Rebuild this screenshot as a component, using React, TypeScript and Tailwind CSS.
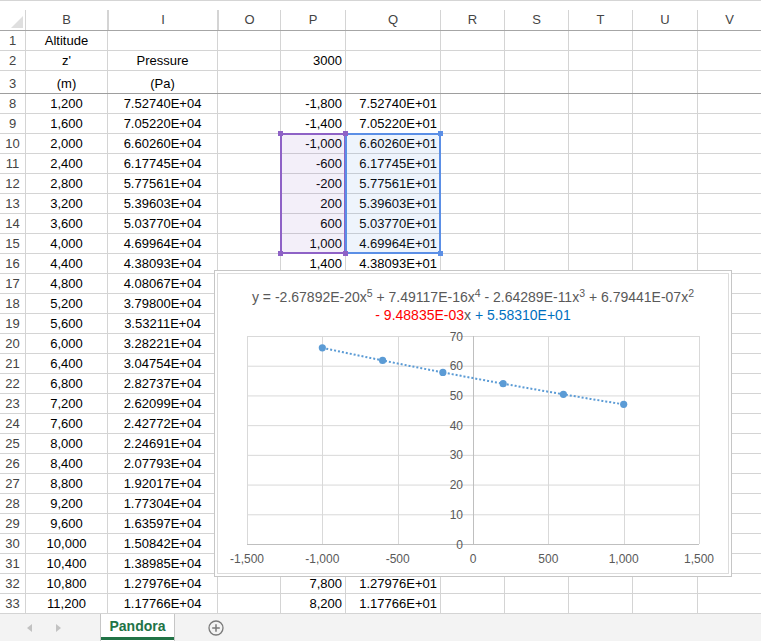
import React from "react";

const mantissas = [
  "7.52740", "7.05220", "6.60260", "6.17745", "5.77561", "5.39603", "5.03770",
  "4.69964", "4.38093", "4.08067", "3.79800", "3.53211", "3.28221", "3.04754",
  "2.82737", "2.62099", "2.42772", "2.24691", "2.07793", "1.92017", "1.77304",
  "1.63597", "1.50842", "1.38985", "1.27976", "1.17766",
];

const fmt = (n: number) => n.toLocaleString("en-US");

// trendline coefficients, highest power first
const coef = [-2.67892e-20, 7.49117e-16, -2.64289e-11, 6.79441e-7, -9.48835e-3, 5.5831e1];
const poly = (x: number) => coef.reduce((acc, c) => acc * x + c, 0);

const px = (x: number) => 29 + ((x + 1500) * 452) / 3000;
const py = (y: number) => 12 + ((70 - y) * 208) / 70;

type CellProps = {
  w: string;
  className?: string;
  children?: React.ReactNode;
};

function Cell({ w, className, children }: CellProps) {
  return (
    <div
      className={`${w} h-full shrink-0 border-r border-[#d4d4d4] flex px-[3px] ${className ?? "items-center"}`}
    >
      {children}
    </div>
  );
}

type RowData = {
  num: number;
  b?: string;
  i?: string;
  p?: string;
  q?: string;
};

function SheetRow({ row, tall }: { row: RowData; tall?: boolean }) {
  const align = tall ? "items-end" : "items-center";
  return (
    <div
      className={`flex ${tall ? "h-[23px] border-b border-[#9e9e9e]" : "h-[20px] border-b border-[#d4d4d4]"}`}
    >
      <Cell w="w-[26px]" className={`${align} justify-center text-[#444]`}>
        {row.num}
      </Cell>
      <Cell w="w-[82px]" className={`${align} justify-center`}>
        {row.b}
      </Cell>
      <Cell w="w-[110px]" className={`${align} justify-center`}>
        {row.i}
      </Cell>
      <Cell w="w-[63px]" className={align} />
      <Cell w="w-[65px]" className={`${align} justify-end`}>
        {row.p}
      </Cell>
      <Cell w="w-[95px]" className={`${align} justify-end`}>
        {row.q}
      </Cell>
      <Cell w="w-[64px]" className={align} />
      <Cell w="w-[64px]" className={align} />
      <Cell w="w-[64px]" className={align} />
      <Cell w="w-[65px]" className={align} />
      <Cell w="w-[64px]" className={align} />
    </div>
  );
}

function Chart() {
  const yTicks = [0, 10, 20, 30, 40, 50, 60, 70];
  const xTicks = [-1500, -1000, -500, 0, 500, 1000, 1500];
  const pts = [-1000, -600, -200, 200, 600, 1000];
  const curve: string[] = [];
  for (let x = -1000; x <= 1000; x += 20) {
    curve.push(`${px(x).toFixed(2)},${py(poly(x)).toFixed(2)}`);
  }

  return (
    <div className="absolute left-[214px] top-[270px] w-[518px] h-[307px] border border-[#c6c6c6] bg-white p-[2px]">
      <div className="flex h-full flex-col border border-[#dcdcdc] bg-white">
        <div className="h-[50px] pt-[14px] text-center text-[14px] leading-[18px] text-[#595959]">
          y = -2.67892E-20x<sup>5</sup> + 7.49117E-16x<sup>4</sup> - 2.64289E-11x<sup>3</sup> +
          6.79441E-07x<sup>2</sup>
          <br />
          <span className="text-[#ff0000]">- 9.48835E-03</span>x{" "}
          <span className="text-[#0070c0]">+ 5.58310E+01</span>
        </div>
        <svg width="510" height="248" className="block">
          {yTicks.map((v) => (
            <line
              key={`h${v}`}
              x1={px(-1500)}
              x2={px(1500)}
              y1={py(v) + 0.5}
              y2={py(v) + 0.5}
              stroke={v === 0 ? "#bfbfbf" : "#d9d9d9"}
              strokeWidth="1"
            />
          ))}
          {xTicks.map((v) => (
            <line
              key={`v${v}`}
              x1={Math.round(px(v)) + 0.5}
              x2={Math.round(px(v)) + 0.5}
              y1={py(70)}
              y2={py(0)}
              stroke={v === 0 ? "#bfbfbf" : "#d9d9d9"}
              strokeWidth="1"
            />
          ))}
          {yTicks.map((v) => (
            <text
              key={`yl${v}`}
              x={245}
              y={py(v) + 4.5}
              textAnchor="end"
              fontSize="12"
              fill="#595959"
            >
              {v}
            </text>
          ))}
          {xTicks.map((v) => (
            <text
              key={`xl${v}`}
              x={px(v)}
              y={239}
              textAnchor="middle"
              fontSize="12"
              fill="#595959"
            >
              {fmt(v)}
            </text>
          ))}
          <polyline
            points={curve.join(" ")}
            fill="none"
            stroke="#5b9bd5"
            strokeWidth="2"
            strokeDasharray="2 2"
          />
          {pts.map((x) => (
            <circle key={x} cx={px(x)} cy={py(poly(x))} r="3.6" fill="#5b9bd5" />
          ))}
        </svg>
      </div>
    </div>
  );
}

function Handle({ className }: { className: string }) {
  return <div className={`absolute h-[5px] w-[5px] ${className}`} />;
}

export default function App() {
  const rows: RowData[] = mantissas.map((m, idx) => {
    const alt = 1200 + idx * 400;
    const num = 8 + idx;
    // rows 17..31 of P and Q sit under the chart
    const covered = num >= 17 && num <= 31;
    return {
      num,
      b: fmt(alt),
      i: `${m}E+04`,
      p: covered ? undefined : fmt(alt - 3000),
      q: covered ? undefined : `${m}E+01`,
    };
  });

  const headers = [
    { l: "B", w: "w-[82px]" },
    { l: "I", w: "w-[110px] border-l border-l-[#d4d4d4]" },
    { l: "O", w: "w-[63px] border-l border-l-[#d4d4d4]" },
    { l: "P", w: "w-[65px]" },
    { l: "Q", w: "w-[95px]" },
    { l: "R", w: "w-[64px]" },
    { l: "S", w: "w-[64px]" },
    { l: "T", w: "w-[64px]" },
    { l: "U", w: "w-[65px]" },
    { l: "V", w: "w-[64px]" },
  ];

  return (
    <div className="relative h-[641px] w-[761px] overflow-hidden bg-white font-['Liberation_Sans',Arial,sans-serif] text-[13px] text-black">
      {/* formula-bar edge */}
      <div className="h-[10px] border-t border-[#d5d5d5]" />

      {/* column headers */}
      <div className="flex h-[21px] border-b border-[#a6a6a6]">
        <div className="relative h-full w-[26px] shrink-0 border-r border-[#d4d4d4]">
          <svg width="12" height="12" className="absolute bottom-[2px] right-[2px]">
            <polygon points="12,0 12,12 0,12" fill="#dfdfdf" />
          </svg>
        </div>
        {headers.map((h) => (
          <div
            key={h.l}
            className={`${h.w} flex h-full shrink-0 items-center justify-center border-r border-[#d4d4d4] text-[#444]`}
          >
            {h.l}
          </div>
        ))}
      </div>

      <SheetRow row={{ num: 1, b: "Altitude" }} />
      <SheetRow row={{ num: 2, b: "z'", i: "Pressure", p: "3000" }} />
      <SheetRow row={{ num: 3, b: "(m)", i: "(Pa)" }} tall />
      {rows.map((r) => (
        <SheetRow key={r.num} row={r} />
      ))}

      {/* sheet tabs */}
      <div className="flex h-[28px] bg-[#f3f3f3]">
        <div className="flex w-[100px] shrink-0 items-center gap-[24px] pl-[27px]">
          <svg width="5" height="8">
            <polygon points="5,0 5,8 0,4" fill="#c2c2c2" />
          </svg>
          <svg width="5" height="8">
            <polygon points="0,0 0,8 5,4" fill="#c2c2c2" />
          </svg>
        </div>
        <div className="flex w-[75px] shrink-0 flex-col border-x border-[#c6c6c6] bg-white">
          <div className="flex flex-1 items-center justify-center pt-[2px] text-[14px] font-bold text-[#217346]">
            Pandora
          </div>
          <div className="h-[3px] bg-[#217346]" />
          <div className="h-[2px]" />
        </div>
        <div className="flex items-center pl-[33px]">
          <svg width="16" height="16" viewBox="0 0 16 16">
            <circle cx="8" cy="8" r="7" fill="none" stroke="#7a7a7a" strokeWidth="1.3" />
            <path d="M8 4.2v7.6M4.2 8h7.6" stroke="#7a7a7a" strokeWidth="1.5" />
          </svg>
        </div>
      </div>

      {/* range highlights for the chart data */}
      <div className="absolute left-[280px] top-[133px] h-[121px] w-[66px] border-2 border-[#8e62c6] bg-[#8e62c6]/10" />
      <div className="absolute left-[345px] top-[133px] h-[121px] w-[96px] border-2 border-[#5b8fe6] bg-[#5b8fe6]/10" />
      <Handle className="left-[278px] top-[131px] bg-[#8e62c6]" />
      <Handle className="left-[343px] top-[131px] bg-[#8e62c6]" />
      <Handle className="left-[438px] top-[131px] bg-[#5b8fe6]" />
      <Handle className="left-[278px] top-[251px] bg-[#8e62c6]" />
      <Handle className="left-[343px] top-[251px] bg-[#8e62c6]" />
      <Handle className="left-[438px] top-[251px] bg-[#5b8fe6]" />

      <Chart />
    </div>
  );
}
